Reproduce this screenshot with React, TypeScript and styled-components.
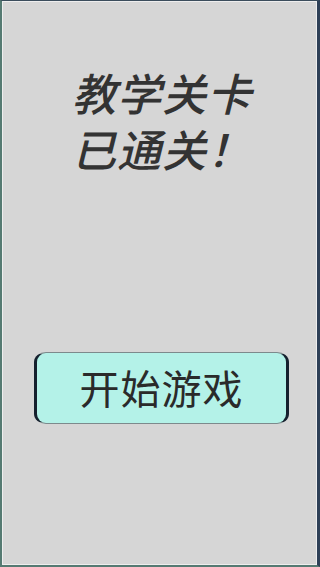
import styled, { createGlobalStyle } from "styled-components";

const GlobalStyle = createGlobalStyle`
    html, body {
        margin: 0;
        padding: 0;
        background: #d6d6d6;
    }
    * {
        box-sizing: border-box;
    }
`;

const Screen = styled.div`
    width: 320px;
    height: 567px;
    background: #d6d6d6;
    border-top: 1px solid #3b4d5c;
    border-left: 2px solid #557a72;
    border-right: 3px solid #2e4057;
    border-bottom: 2px solid #557a72;
    box-shadow: inset 1px 1px 0 #eeeeee, inset -1px -1px 0 #eeeeee;
    display: flex;
    flex-direction: column;
    font-family: "Noto Sans CJK SC", "Noto Sans", sans-serif;
`;

const Title = styled.h1`
    margin: 63px 0 0 70px;
    display: flex;
    flex-direction: column;
    font-size: 44px;
    font-weight: 500;
    font-style: italic;
    color: #333333;
    letter-spacing: 1px;
`;

const TitleLine = styled.span`
    display: block;
    line-height: 56px;
`;

const StartButton = styled.button`
    margin: 176px 0 0 32px;
    width: 255px;
    height: 72px;
    background: #b4f2e8;
    border-top: 1px solid #7d8a8c;
    border-bottom: 1px solid #7d8a8c;
    border-left: 3px solid #15202e;
    border-right: 3px solid #15202e;
    border-radius: 12px / 10px;
    font-family: "Noto Sans CJK SC", "Noto Sans", sans-serif;
    font-size: 40px;
    color: #2a2a2a;
    letter-spacing: 1px;
    padding: 0 0 2px 0;
    cursor: pointer;
`;

export default function App() {
    return (
        <>
            <GlobalStyle />
            <Screen>
                <Title>
                    <TitleLine>教学关卡</TitleLine>
                    <TitleLine>已通关！</TitleLine>
                </Title>
                <StartButton>开始游戏</StartButton>
            </Screen>
        </>
    );
}
